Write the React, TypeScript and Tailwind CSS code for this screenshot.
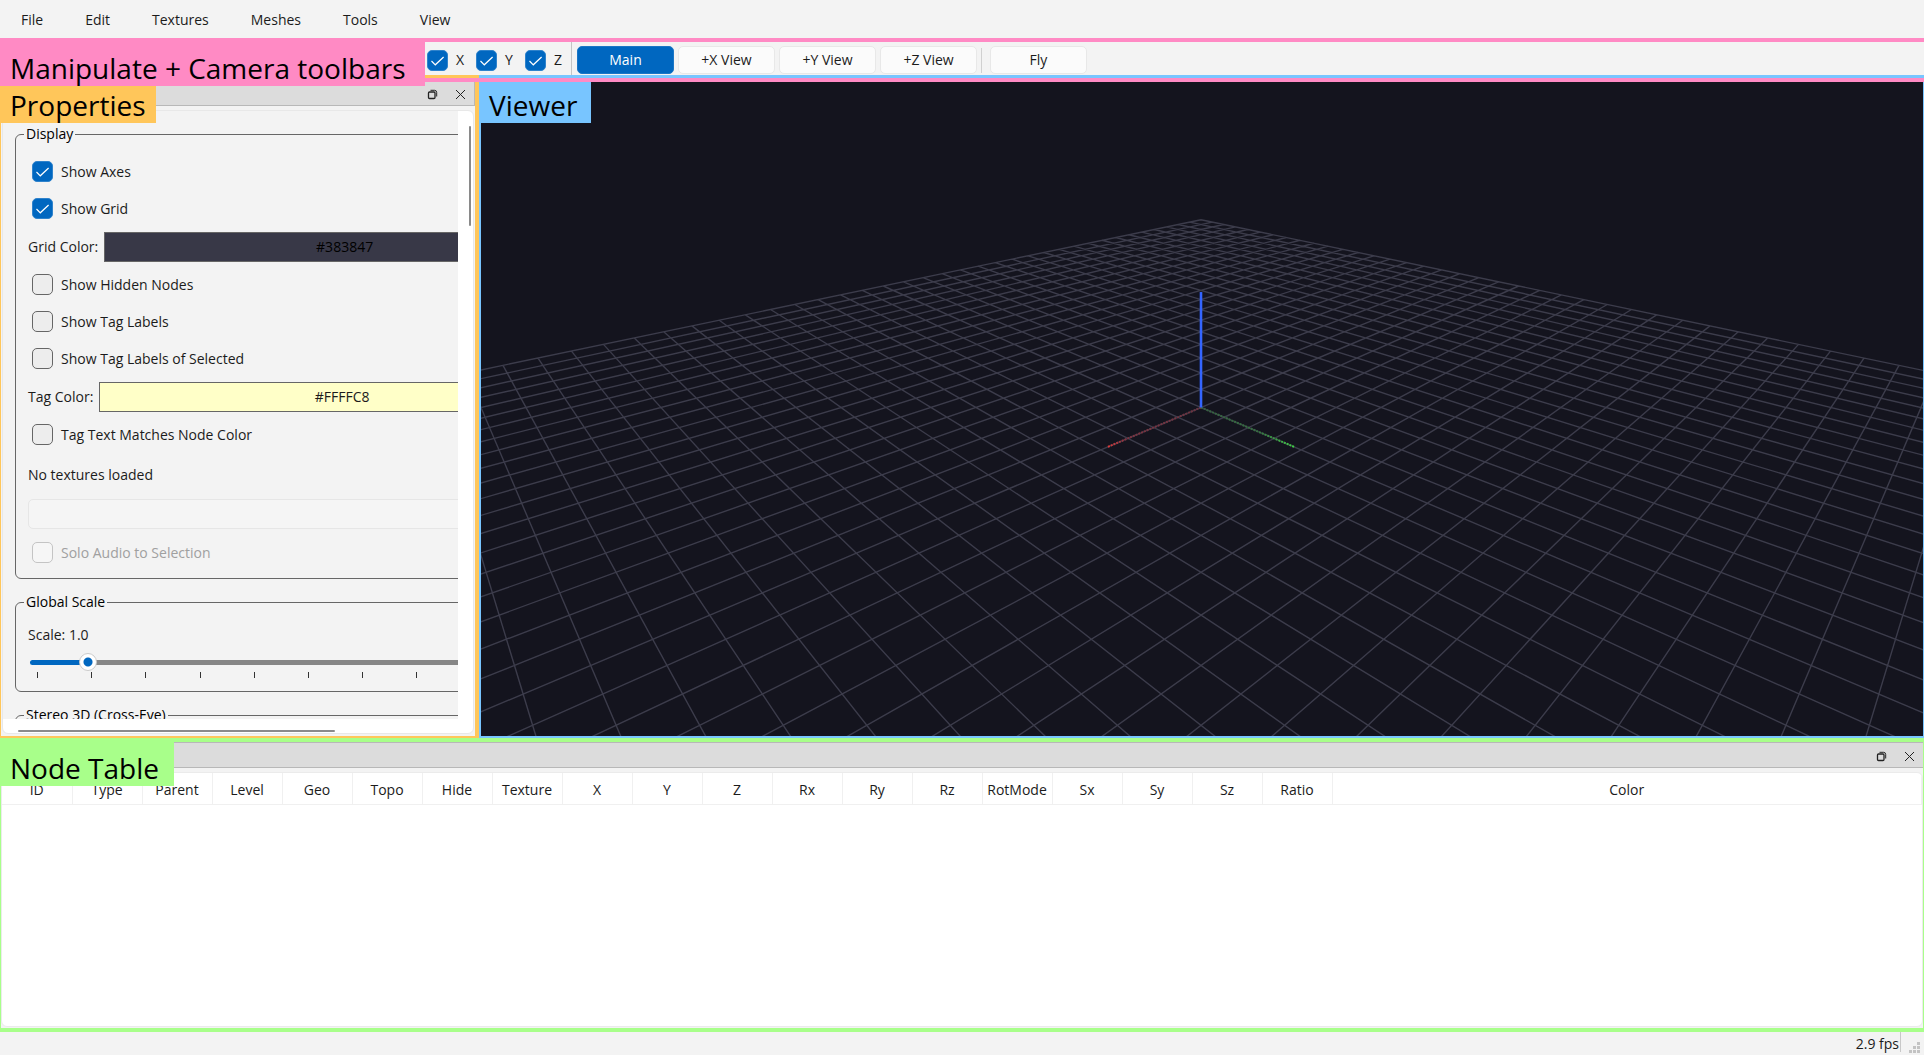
import React, { useState } from 'react';

const MENUS = ['File', 'Edit', 'Textures', 'Meshes', 'Tools', 'View'];
const COLUMNS = [
  'ID', 'Type', 'Parent', 'Level', 'Geo', 'Topo', 'Hide', 'Texture', 'X', 'Y', 'Z',
  'Rx', 'Ry', 'Rz', 'RotMode', 'Sx', 'Sy', 'Sz', 'Ratio',
];
const CAMERAS = ['Main', '+X View', '+Y View', '+Z View'];

// Camera: 45 degree vertical fov, 25 units away, looking at the origin
const VIEW_W = 1442;
const VIEW_H = 659;
const FOCAL = VIEW_H / 2 / Math.tan(Math.PI / 8);
const DISTANCE = 25;
const ELEVATION = (25 * Math.PI) / 180;
const GRID_HALF = 20;
const AXIS_LENGTH = 3.75;
const NEAR = 0.6;

type Vec = [number, number, number];

const depthOf = ([x, y, z]: Vec) =>
  DISTANCE - ((x + y) / Math.SQRT2) * Math.cos(ELEVATION) - z * Math.sin(ELEVATION);

const project = (p: Vec) => {
  const [x, y, z] = p;
  const depth = depthOf(p);
  const side = (y - x) / Math.SQRT2;
  const up = z * Math.cos(ELEVATION) - ((x + y) / Math.SQRT2) * Math.sin(ELEVATION);
  return {
    x: VIEW_W / 2 + (FOCAL * side) / depth,
    y: VIEW_H / 2 - (FOCAL * up) / depth,
  };
};

const segment = (a: Vec, b: Vec) => {
  const da = depthOf(a);
  const db = depthOf(b);
  let end = b;
  if (db < NEAR) {
    const k = (da - NEAR) / (da - db);
    end = [a[0] + (b[0] - a[0]) * k, a[1] + (b[1] - a[1]) * k, a[2] + (b[2] - a[2]) * k];
  }
  const p = project(a);
  const q = project(end);
  return `M${p.x.toFixed(1)} ${p.y.toFixed(1)}L${q.x.toFixed(1)} ${q.y.toFixed(1)}`;
};

const buildGrid = () => {
  const parts: string[] = [];
  for (let i = -GRID_HALF; i <= GRID_HALF; i++) {
    parts.push(segment([i, -GRID_HALF, 0], [i, GRID_HALF, 0]));
    parts.push(segment([-GRID_HALF, i, 0], [GRID_HALF, i, 0]));
  }
  return parts.join('');
};

const GRID_PATH = buildGrid();
const ORIGIN = project([0, 0, 0]);
const X_END = project([AXIS_LENGTH, 0, 0]);
const Y_END = project([0, AXIS_LENGTH, 0]);
const Z_END = project([0, 0, AXIS_LENGTH]);

interface CheckProps {
  label: string;
  defaultChecked?: boolean;
  disabled?: boolean;
}

const Check: React.FC<CheckProps> = ({ label, defaultChecked, disabled }) => (
  <label className={`flex items-center gap-2 ${disabled ? 'text-[#a0a0a0]' : ''}`}>
    <span className="grid h-[21px] w-[21px] shrink-0">
      <input
        type="checkbox"
        defaultChecked={defaultChecked}
        disabled={disabled}
        className="peer col-start-1 row-start-1 h-[21px] w-[21px] appearance-none rounded-[5px] border border-[#666] bg-[#ededed] checked:border-[#2f83cc] checked:bg-[#0067c0] disabled:border-[#c4c4c4] disabled:bg-[#f6f6f6]"
      />
      <svg
        viewBox="0 0 21 21"
        className="pointer-events-none col-start-1 row-start-1 hidden h-[21px] w-[21px] peer-checked:block"
        fill="none"
        stroke="white"
        strokeWidth="1.2"
      >
        <path d="M4.5 11l3.8 3.8L16.6 7" />
      </svg>
    </span>
    <span>{label}</span>
  </label>
);

const DockButtons: React.FC<{ name: string }> = ({ name }) => (
  <>
    <button type="button" aria-label={`Float ${name}`} className="flex h-full w-7 items-center justify-center">
      <svg width="11" height="11" viewBox="0 0 11 11" fill="none" stroke="#222">
        <rect x="1.5" y="3" width="6.5" height="6.5" rx="1" strokeWidth="1.3" />
        <path d="M3.5 1.3h4a2.2 2.2 0 0 1 2.2 2.2v4" strokeWidth="1" />
      </svg>
    </button>
    <button type="button" aria-label={`Close ${name}`} className="flex h-full w-7 items-center justify-center">
      <svg width="11" height="11" viewBox="0 0 11 11" fill="none" stroke="#222" strokeWidth="1">
        <path d="M1 1l9 9M10 1l-9 9" />
      </svg>
    </button>
  </>
);

const ScaleGroup: React.FC = () => {
  const [scale, setScale] = useState(1);
  const min = 0.1;
  const max = 10;
  const fill = ((scale - min) / (max - min)) * 100;

  return (
    <fieldset className="mt-[13px] w-[583px] rounded-md border border-[#666] px-3 pb-[13px]">
      <legend className="-ml-1 px-[2px] leading-5 text-black">Global Scale</legend>
      <label htmlFor="scale" className="mt-[13px] block leading-5">Scale: {scale.toFixed(1)}</label>
      <div className="mx-[2px]">
        <input
          id="scale"
          type="range"
          min={min}
          max={max}
          step={0.1}
          value={scale}
          onChange={(e) => setScale(Number(e.target.value))}
          className="mt-2 block h-[18px] w-full appearance-none bg-transparent [&::-webkit-slider-runnable-track]:h-[5px] [&::-webkit-slider-runnable-track]:rounded-sm [&::-webkit-slider-runnable-track]:bg-[image:var(--fill)] [&::-webkit-slider-thumb]:-mt-[7px] [&::-webkit-slider-thumb]:h-[18px] [&::-webkit-slider-thumb]:w-[18px] [&::-webkit-slider-thumb]:appearance-none [&::-webkit-slider-thumb]:rounded-full [&::-webkit-slider-thumb]:border [&::-webkit-slider-thumb]:border-[#ccc] [&::-webkit-slider-thumb]:bg-[radial-gradient(circle,#0067c0_4px,#fff_5px)]"
          style={{ '--fill': `linear-gradient(to right, #0067c0 ${fill}%, #868686 ${fill}%)` } as React.CSSProperties}
        />
        <div className="mt-px mr-[3px] ml-[7px] flex h-[6px] justify-between">
          {Array.from({ length: 11 }, (_, i) => (
            <span key={i} className="w-px bg-[#333]" />
          ))}
        </div>
      </div>
    </fieldset>
  );
};

const PropertiesPanel: React.FC = () => (
  <aside className="relative flex w-[479px] shrink-0 flex-col border-b-2 border-l border-r-4 border-[#ffc65a] bg-[#f3f3f3]">
    <div className="flex h-6 shrink-0 justify-end border-b border-r border-[#b8b8b8] bg-[#dcdcdc] pt-px">
      <DockButtons name="Properties" />
    </div>
    <h2 className="absolute top-1 -left-px flex h-[37px] w-[156px] items-end bg-[#ffc65a] pl-[10px] text-[28px] leading-9 text-black">
      Properties
    </h2>

    {/* Scroll area */}
    <div className="m-px mt-1 mb-[2px] flex min-h-0 flex-1 overflow-hidden rounded-md border border-[#e8e8e8] bg-white">
      <div className="flex min-w-0 flex-1 flex-col">
        <div className="min-h-0 flex-1 overflow-hidden bg-[#f3f3f3] pt-[13px] pl-3">
          <fieldset className="w-[583px] rounded-md border border-[#666] px-3 pb-[6px]">
            <legend className="-ml-1 px-[2px] leading-5 text-black">Display</legend>
            <div className="mt-[9px] ml-1 flex h-[37px] items-center">
              <Check label="Show Axes" defaultChecked />
            </div>
            <div className="ml-1 flex h-[37px] items-center">
              <Check label="Show Grid" defaultChecked />
            </div>
            <div className="flex h-[39px] items-center gap-[6px]">
              <label htmlFor="grid-color">Grid Color:</label>
              <button id="grid-color" type="button" className="h-[30px] flex-1 border border-[#666] bg-[#383847] text-black">
                #383847
              </button>
            </div>
            {['Show Hidden Nodes', 'Show Tag Labels', 'Show Tag Labels of Selected'].map((label) => (
              <div key={label} className="ml-1 flex h-[37px] items-center">
                <Check label={label} />
              </div>
            ))}
            <div className="flex h-[39px] items-center gap-[6px]">
              <label htmlFor="tag-color">Tag Color:</label>
              <button id="tag-color" type="button" className="h-[30px] flex-1 border border-[#666] bg-[#ffffc8]">
                #FFFFC8
              </button>
            </div>
            <div className="ml-1 flex h-[37px] items-center">
              <Check label="Tag Text Matches Node Color" />
            </div>
            <label htmlFor="texture" className="mt-[2px] flex h-[39px] items-center">No textures loaded</label>
            <div className="flex h-[39px] items-center">
              <select
                id="texture"
                disabled
                className="h-[30px] w-full appearance-none rounded-[5px] border border-[#e6e6e6] bg-[#f5f5f5]"
              />
            </div>
            <div className="ml-1 flex h-[39px] items-center">
              <Check label="Solo Audio to Selection" disabled />
            </div>
          </fieldset>

          <ScaleGroup />

          <fieldset className="mt-[13px] w-[583px] rounded-md border border-[#666] px-3 pb-10">
            <legend className="-ml-1 px-[2px] leading-5 text-black">Stereo 3D (Cross-Eye)</legend>
          </fieldset>
        </div>
        <div className="flex h-[14px] shrink-0 items-end pb-px pl-[15px]">
          <div className="h-[2px] w-[317px] rounded-full bg-[#8a8a8a]" />
        </div>
      </div>
      <div className="flex w-[15px] justify-end pt-[15px] pr-[2px]">
        <div className="h-[100px] w-[2px] rounded-full bg-[#8a8a8a]" />
      </div>
    </div>
  </aside>
);

const Viewer: React.FC = () => (
  <main className="relative min-w-0 flex-1 border-b-2 border-l-2 border-r border-[#78c5ff] bg-[#14141e]">
    <h2 className="absolute top-0 -left-[2px] z-10 flex h-[41px] w-[112px] items-end bg-[#78c5ff] pl-[10px] text-[28px] leading-9 text-black">
      Viewer
    </h2>
    <svg
      viewBox={`1 4 ${VIEW_W} ${VIEW_H - 5}`}
      preserveAspectRatio="xMidYMid slice"
      className="absolute inset-0 h-full w-full"
      fill="none"
    >
      <defs>
        <linearGradient id="xAxis" gradientUnits="userSpaceOnUse" x1={ORIGIN.x} y1={ORIGIN.y} x2={X_END.x} y2={X_END.y}>
          <stop offset="0" stopColor="#6b3340" />
          <stop offset="0.8" stopColor="#7d3340" />
          <stop offset="1" stopColor="#e03a3a" />
        </linearGradient>
        <linearGradient id="yAxis" gradientUnits="userSpaceOnUse" x1={ORIGIN.x} y1={ORIGIN.y} x2={Y_END.x} y2={Y_END.y}>
          <stop offset="0" stopColor="#35603f" />
          <stop offset="0.6" stopColor="#357040" />
          <stop offset="1" stopColor="#3fd045" />
        </linearGradient>
      </defs>
      <path d={GRID_PATH} stroke="#3c3c4b" strokeWidth="1.4" />
      <path d={`M${ORIGIN.x} ${ORIGIN.y}L${X_END.x} ${X_END.y}`} stroke="url(#xAxis)" strokeWidth="2" strokeDasharray="2 1" />
      <path d={`M${ORIGIN.x} ${ORIGIN.y}L${Y_END.x} ${Y_END.y}`} stroke="url(#yAxis)" strokeWidth="2" strokeDasharray="2 1" />
      <path d={`M${ORIGIN.x} ${ORIGIN.y}L${Z_END.x} ${Z_END.y}`} stroke="#3465ff" strokeWidth="2.6" />
    </svg>
  </main>
);

const NodeTable: React.FC = () => (
  <section className="relative flex min-h-0 flex-[286_1_0%] flex-col border-x border-y-4 border-[#a8ff8a] bg-[#f3f3f3]">
    <div className="flex h-[26px] shrink-0 justify-end border border-x-0 border-[#b8b8b8] bg-[#dcdcdc] pt-[3px]">
      <DockButtons name="Node Table" />
    </div>
    <h2 className="absolute -top-px -left-px flex h-[45px] w-[174px] items-end bg-[#a8ff8a] pl-[10px] text-[28px] leading-9 text-black">
      Node Table
    </h2>
    <div className="mt-1 mb-px min-h-0 flex-1 overflow-hidden rounded-md border border-[#ebebeb] bg-white">
      <table className="w-full table-fixed border-collapse">
        <thead>
          <tr className="h-[31px]">
            {COLUMNS.map((col) => (
              <th key={col} scope="col" className="w-[70px] border-r border-b border-[#f0f0f0] p-0 pt-[3px] font-normal">
                {col}
              </th>
            ))}
            <th scope="col" className="border-r border-b border-[#f0f0f0] p-0 pt-[3px] font-normal">Color</th>
          </tr>
        </thead>
        <tbody />
      </table>
    </div>
  </section>
);

const App: React.FC = () => {
  const [camera, setCamera] = useState('Main');

  return (
    <div className="flex h-screen flex-col overflow-hidden bg-[#f3f3f3] font-['Open_Sans','Noto_Sans',sans-serif] text-[14px] leading-5 text-[#1b1b1b]">
      {/* Menu bar */}
      <nav className="flex h-[38px] shrink-0 items-center pt-px">
        {MENUS.map((menu) => (
          <button key={menu} type="button" className="px-[21px]">{menu}</button>
        ))}
      </nav>

      {/* Toolbars */}
      <header className="relative z-20 shrink-0 border-y-4 border-[#ff8ac4]">
        <h2 className="absolute top-0 left-0 flex h-[44px] w-[425px] items-end bg-[#ff8ac4] pl-[10px] text-[28px] leading-9 whitespace-nowrap text-black">
          Manipulate + Camera toolbars
        </h2>
        <div className="flex h-[33px] items-center pl-[427px]">
          <div className="flex h-full w-[145px] items-center border-r border-[#c4c4c4] pt-[3px]">
            {['X', 'Y', 'Z'].map((axis) => (
              <div key={axis} className="w-[49px] shrink-0">
                <Check label={axis} defaultChecked />
              </div>
            ))}
          </div>
          <div className="ml-[5px] flex h-full items-center gap-1 pt-[3px]">
            {CAMERAS.map((name) => (
              <button
                key={name}
                type="button"
                onClick={() => setCamera(name)}
                className={`h-7 w-[97px] rounded-[5px] border ${
                  camera === name
                    ? 'border-[#1a76c6] bg-[#0067c0] text-white'
                    : 'border-[#e8e8e8] bg-[#fbfbfb]'
                }`}
              >
                {name}
              </button>
            ))}
            <span className="mr-1 h-[25px] w-px bg-[#d0d0d0]" />
            <button type="button" className="h-7 w-[97px] rounded-[5px] border border-[#e8e8e8] bg-[#fbfbfb]">
              Fly
            </button>
          </div>
        </div>
        <div className="flex h-[3px]">
          <span className="w-[479px] bg-[#ffc65a]" />
          <span className="flex-1 bg-[#78c5ff]" />
        </div>
      </header>

      <div className="flex min-h-0 flex-[656_1_0%]">
        <PropertiesPanel />
        <Viewer />
      </div>

      <NodeTable />

      {/* Status bar */}
      <footer className="flex h-[23px] shrink-0 items-start justify-end">
        <span className="h-5 border-r border-[#c8c8c8] pt-[2px] pr-px">2.9 fps</span>
        <svg width="22" height="22" viewBox="0 0 22 22" fill="#c3c3c3" className="mr-px">
          <path d="M16 10h3v3h-3zM12 14h3v3h-3zM16 14h3v3h-3zM8 18h3v3h-3zM12 18h3v3h-3zM16 18h3v3h-3z" />
        </svg>
      </footer>
    </div>
  );
};

export default App;
